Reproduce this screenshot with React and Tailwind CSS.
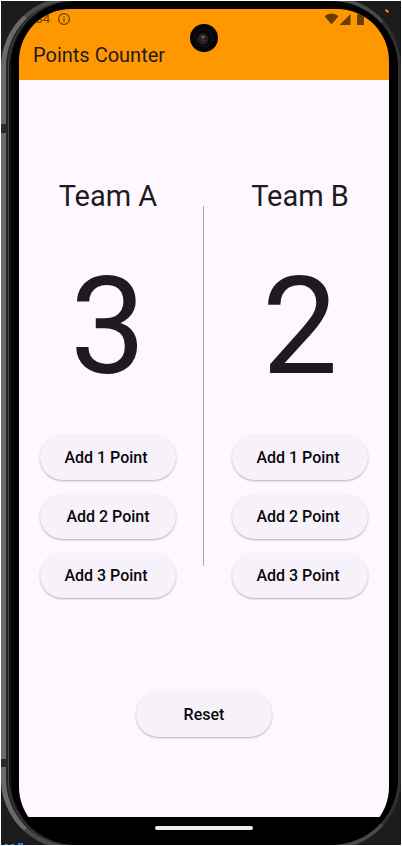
import { useState } from "react";

function PointButton({ children, onClick }) {
  return (
    <button
      type="button"
      onClick={onClick}
      className="h-[45px] w-34 whitespace-pre rounded-full bg-[#f7f2fa] text-base font-medium text-[#08080a] shadow-[0_1px_2px_rgba(0,0,0,0.3)]"
    >
      {children}
    </button>
  );
}

function Team({ name, points, labels, onAdd }) {
  return (
    <section className="flex flex-col items-center">
      <h2 className="text-[29px] leading-9">{name}</h2>
      <output className="mt-[34px] text-[135px] leading-[158px]">{points}</output>
      <div className="mt-[29px] flex flex-col gap-3.5">
        {labels.map((label, i) => (
          <PointButton key={label} onClick={() => onAdd(i + 1)}>
            {label}
          </PointButton>
        ))}
      </div>
    </section>
  );
}

function StatusBar() {
  return (
    <div className="flex h-5 items-center justify-between pl-1.5 pr-6 text-[#693f00]">
      <div className="flex items-center gap-2">
        <span className="text-[13px] leading-5">9:34</span>
        <svg viewBox="0 0 12 12" className="size-3" fill="none" stroke="currentColor">
          <circle cx="6" cy="6" r="5.4" strokeWidth="1.2" />
          <path d="M6 5.2v3.6M6 3v1.3" strokeWidth="1.2" />
        </svg>
      </div>
      <svg viewBox="0 0 40 12" className="h-3 w-10" fill="currentColor">
        <path d="M-.5 3.200C4-.3 9.500-.3 13.500 3.200L6.500 11.500Z" />
        <path d="M25.500 1v11h-11Z" />
        <path d="M32 1.500h1.500v-1.200h4v1.200h1.500v10.500h-7Z" />
      </svg>
    </div>
  );
}

function Camera() {
  return (
    <svg
      viewBox="0 0 28 28"
      className="absolute left-1/2 top-[15px] size-7 -translate-x-1/2"
    >
      <circle cx="14" cy="14" r="14" fill="#050505" />
      <circle cx="14" cy="14" r="9" fill="#080808" stroke="#161616" />
      <circle cx="13" cy="15" r="5" fill="#1f1b1d" stroke="#2b2b2d" />
      <path d="M10 13q3-4 6 0l-3 2Z" fill="#4d4649" />
      <circle cx="12.500" cy="15.500" r="2" fill="#52202a" />
      <circle cx="14" cy="17" r="1" fill="#44303f" />
      <circle cx="13" cy="13.500" r=".7" fill="#9a8f92" />
    </svg>
  );
}

export default function App() {
  const [a, setA] = useState(3);
  const [b, setB] = useState(2);

  return (
    <div className="relative h-screen overflow-hidden border border-white bg-[#1c1c1c] font-[Roboto,sans-serif] text-[#1d1b20]">
      <svg viewBox="0 0 26 2" className="absolute bottom-0 left-0 h-0.5 w-[26px]" fill="#1f86ea">
        <path d="M4 1h3v1h-3zM10 1h3v1h-3zM17 0h5v2h-5z" />
      </svg>
      <div className="relative -mt-1 flex h-[calc(100%+8px)] flex-col rounded-[70px] border-y-4 border-l-[5px] border-r-[3px] border-y-[#4a4a4a] border-l-[#6a6a6a] border-r-[#303030] bg-black pt-2 pr-[9px] pb-1.5 pl-[13px] shadow-[inset_2px_0_0_#242424,inset_3px_0_0_#4a4a4a,inset_5px_0_0_#161616]">
        <div className="relative flex grow flex-col overflow-hidden rounded-[52px] bg-black">
          <header className="flex h-[71px] shrink-0 flex-col bg-[#ff9800]">
            <StatusBar />
            <h1 className="pt-3 pl-[14px] text-xl leading-7">Points Counter</h1>
          </header>
          <main className="flex grow flex-col items-center bg-[#fef7ff]">
            <div className="mt-[98px] flex w-full items-start justify-evenly">
              <Team
                name="Team A"
                points={a}
                labels={["Add 1 Point ", "Add 2 Point", "Add 3 Point "]}
                onAdd={(n) => setA(a + n)}
              />
              <div className="mt-7 flex h-[360px] w-[14px] pl-1.5">
                <div className="w-px bg-[#aaa5ac]" />
              </div>
              <Team
                name="Team B"
                points={b}
                labels={["Add 1 Point ", "Add 2 Point ", "Add 3 Point "]}
                onAdd={(n) => setB(b + n)}
              />
            </div>
            <div className="mt-[94px]">
              <PointButton
                onClick={() => {
                  setA(0);
                  setB(0);
                }}
              >
                Reset
              </PointButton>
            </div>
          </main>
          <footer className="flex h-[22px] shrink-0 justify-center bg-black pt-[9px]">
            <div className="h-1 w-[98px] rounded-full bg-[#ececec]" />
          </footer>
          <Camera />
        </div>
      </div>
      <div className="absolute top-[123px] left-0 h-[9px] w-[6px] bg-[#2b2b2b]" />
      <div className="absolute top-[758px] left-0 h-[8px] w-[6px] bg-[#2b2b2b]" />
      <div className="absolute top-[9px] right-[12px] h-[2px] w-1 rotate-45 bg-[#ff9800]" />
    </div>
  );
}
